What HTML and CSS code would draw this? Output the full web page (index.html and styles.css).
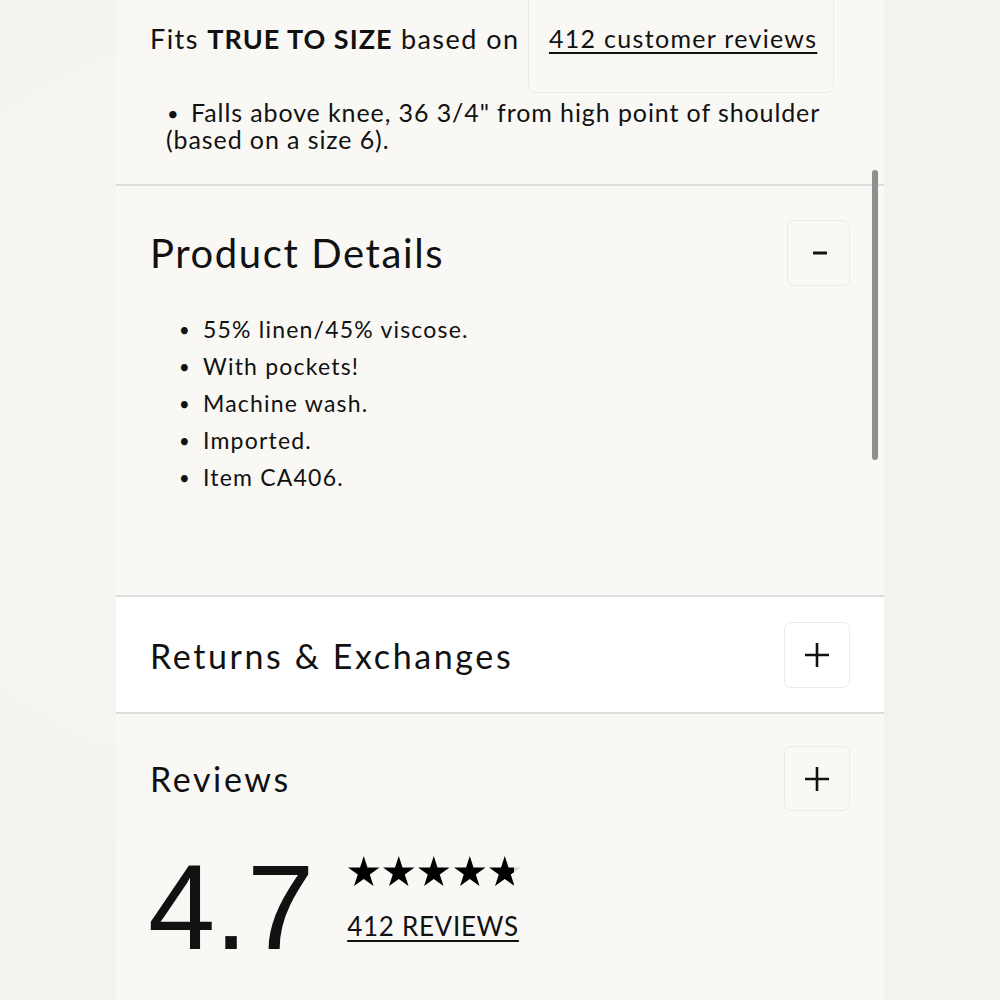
FILE: index.html
```html
<!DOCTYPE html>
<html lang="en">
<head>
<meta charset="utf-8">
<title>Product details</title>
<link rel="stylesheet" href="styles.css">
</head>
<body>
<div class="page">
  <div class="panel">
    <section class="fit">
      <div class="fit-row">
        <p class="fit-text">Fits <strong>TRUE TO SIZE</strong> based on</p>
        <div class="fit-box"><a class="fit-link" href="#">412 customer reviews</a></div>
      </div>
      <ul class="fit-list">
        <li>Falls above knee, 36 3/4" from high point of shoulder (based on a size 6).</li>
      </ul>
    </section>

    <section class="acc details">
      <div class="acc-head">
        <h2 class="acc-title acc-title-lg">Product Details</h2>
        <button class="toggle toggle-minus" type="button" aria-label="Collapse">
          <svg width="16" height="4" viewBox="0 0 16 4"><rect x="1" y="0.5" width="14" height="3" fill="#111"/></svg>
        </button>
      </div>
      <ul class="details-list">
        <li>55% linen/45% viscose.</li>
        <li>With pockets!</li>
        <li>Machine wash.</li>
        <li>Imported.</li>
        <li>Item CA406.</li>
      </ul>
    </section>

    <section class="acc returns">
      <div class="acc-head">
        <h2 class="acc-title">Returns &amp; Exchanges</h2>
        <button class="toggle" type="button" aria-label="Expand">
          <svg width="26" height="26" viewBox="0 0 26 26"><path d="M1 13H25M13 1V25" stroke="#111" stroke-width="2.6" fill="none"/></svg>
        </button>
      </div>
    </section>

    <section class="acc reviews">
      <div class="acc-head">
        <h2 class="acc-title">Reviews</h2>
        <button class="toggle" type="button" aria-label="Expand">
          <svg width="26" height="26" viewBox="0 0 26 26"><path d="M1 13H25M13 1V25" stroke="#111" stroke-width="2.6" fill="none"/></svg>
        </button>
      </div>
      <div class="rating">
        <div class="rating-score">4.7</div>
        <div class="rating-side">
          <svg class="stars" width="176" height="30" viewBox="0 0 176 30" aria-label="4.7 out of 5 stars">
            <defs>
              <polygon id="star" points="15.77,0 19.49,11.46 31.54,11.46 21.79,18.54 25.52,29.99 15.77,22.91 6.02,29.99 9.75,18.54 0,11.46 12.05,11.46"/>
              <linearGradient id="part" x1="0" x2="1" y1="0" y2="0">
                <stop offset="0.78" stop-color="#000"/>
                <stop offset="0.78" stop-color="#d6d6d6"/>
              </linearGradient>
            </defs>
            <use href="#star" x="1" fill="#000"/>
            <use href="#star" x="36" fill="#000"/>
            <use href="#star" x="71" fill="#000"/>
            <use href="#star" x="107" fill="#000"/>
            <polygon transform="translate(142 0)" fill="url(#part)" points="15.77,0 19.49,11.46 31.54,11.46 21.79,18.54 25.52,29.99 15.77,22.91 6.02,29.99 9.75,18.54 0,11.46 12.05,11.46"/>
          </svg>
          <a class="rating-link" href="#">412 REVIEWS</a>
        </div>
      </div>
    </section>
  </div>
  <div class="scrollbar"></div>
</div>
</body>
</html>
```

FILE: styles.css
```css
* { box-sizing: border-box; }

html, body {
  margin: 0;
  padding: 0;
}

body {
  background: #f5f4f1;
  font-family: Lato, "Noto Sans", sans-serif;
  color: #111;
  height: 1000px;
  overflow: hidden;
}

.page {
  position: relative;
  width: 1000px;
  height: 1000px;
  background: radial-gradient(ellipse at 30% 40%, #f8f7f4 0%, #f3f2ef 70%);
}

.panel {
  margin-left: 116px;
  width: 768px;
  height: 1000px;
  background: #f9f8f5;
}

/* Fit section */
.fit {
  height: 186px;
  padding: 0 34px 0 34px;
  border-bottom: 2px solid #dedddb;
}

.fit-row {
  display: flex;
  align-items: flex-start;
}

.fit-text {
  margin: 23px 0 0 0;
  font-size: 27px;
  line-height: 32px;
  letter-spacing: 1.45px;
  white-space: nowrap;
}

.fit-text strong {
  font-weight: 700;
  letter-spacing: 1px;
}

.fit-box {
  margin: -40px 16px 0 auto;
  width: 306px;
  height: 133px;
  border: 1.5px solid #ebeae7;
  border-radius: 7px;
  padding: 61px 0 0 20px;
  font-size: 25px;
  line-height: 32px;
}

.fit-link {
  color: #111;
  letter-spacing: 1.3px;
  white-space: nowrap;
  text-decoration: underline;
  text-decoration-thickness: 2px;
  text-underline-offset: 4px;
}

.fit-list {
  list-style: none;
  margin: 6px 0 0 0;
  padding: 0 20px 0 16px;
  font-size: 25px;
  line-height: 27px;
  letter-spacing: 0.9px;
}

.fit-list li::before,
.details-list li::before {
  content: "•";
  display: inline-block;
  letter-spacing: 0;
  font-size: 0.8em;
  line-height: 1;
  vertical-align: 1px;
}

.fit-list li::before {
  width: 24px;
  padding-left: 1px;
}

/* Accordions */
.acc {
  padding: 0 34px;
}

.acc-head {
  display: flex;
  align-items: center;
  justify-content: space-between;
}

.acc-title {
  margin: 0;
  font-weight: 400;
  font-size: 34px;
  letter-spacing: 2.6px;
}

.acc-title-lg {
  font-size: 40px;
  letter-spacing: 1.6px;
}

.toggle {
  width: 66px;
  height: 66px;
  border: 1.5px solid #ebeae7;
  border-radius: 7px;
  background: transparent;
  display: flex;
  align-items: center;
  justify-content: center;
  padding: 0;
}

.toggle-minus {
  width: 63px;
  padding-left: 2px;
}

.details {
  height: 411px;
  padding-top: 34px;
  border-bottom: 2px solid #dedddb;
}

.details-list {
  list-style: none;
  margin: 25px 0 0 0;
  padding: 0 0 0 29px;
  font-size: 23px;
  line-height: 37px;
  letter-spacing: 1.2px;
}

.details-list li::before {
  width: 24px;
}

.returns {
  height: 117px;
  padding-top: 25px;
  background: #ffffff;
  border-bottom: 2px solid #dedddb;
}

.reviews {
  padding-top: 32px;
}

.reviews .toggle {
  height: 65px;
}

.rating {
  display: flex;
  align-items: flex-start;
  margin-top: 26px;
}

.rating-score {
  font-family: "Liberation Sans", Arial, sans-serif;
  font-size: 121px;
  line-height: 140px;
  letter-spacing: -1px;
  margin-left: -2px;
}

.rating-side {
  margin-left: 34px;
  display: flex;
  flex-direction: column;
  padding-top: 19px;
}

.stars {
  display: block;
}

.rating-link {
  margin-top: 24px;
  color: #111;
  font-size: 26px;
  line-height: 32px;
  letter-spacing: 0.7px;
  text-decoration: underline;
  text-decoration-thickness: 2px;
  text-underline-offset: 4px;
}

.scrollbar {
  position: absolute;
  left: 872px;
  top: 170px;
  width: 6px;
  height: 290px;
  border-radius: 3px;
  background: #8f8f8f;
}
```
